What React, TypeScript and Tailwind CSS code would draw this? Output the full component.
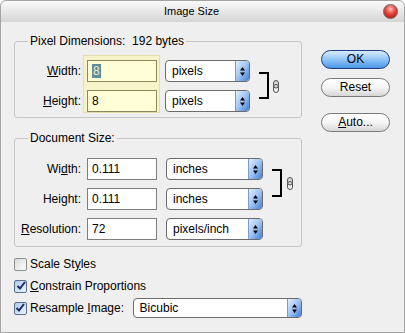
import React from 'react';

const Arrows = () => (
  <svg width="5" height="9" viewBox="0 0 5 9">
    <path d="M2.5 0 L5 3.5 H0 Z M0 5.5 H5 L2.5 9 Z" fill="#000" />
  </svg>
);

const Chain = () => (
  <svg width="6" height="13" viewBox="0 0 6 13">
    <rect x="0.5" y="0.5" width="5" height="7.5" rx="2.5" fill="#d8d8d8" stroke="#555" />
    <rect x="0.5" y="4.5" width="5" height="8" rx="2.5" fill="none" stroke="#555" />
  </svg>
);

const Select = ({ value, w, h }: { value: string; w: string; h: string }) => (
  <div className={`flex ${w} ${h} overflow-hidden rounded-[4px] border border-[#6b6b6b] bg-white`}>
    <span className="flex flex-1 items-center pl-[6px]">{value}</span>
    <span className="flex w-[14px] items-center justify-center border-l border-[#7d9bd0] bg-gradient-to-br from-[#e2eefd] via-[#9cc3f3] to-[#3f7bd8]">
      <Arrows />
    </span>
  </div>
);

const Check = ({ checked }: { checked: boolean }) => (
  <span
    className={`relative flex h-[13px] w-[13px] items-center justify-center rounded-[2px] border ${
      checked
        ? 'border-[#5b6f8c] bg-gradient-to-br from-[#aecbef] to-[#eef4fc]'
        : 'border-[#8e8f8f] bg-gradient-to-br from-[#d9d9d9] to-white'
    }`}
  >
    {checked && (
      <svg width="10" height="10" viewBox="0 0 10 10">
        <path d="M1.5 5 L4 7.5 L9 1" stroke="#1c2d64" strokeWidth="2" fill="none" />
      </svg>
    )}
  </span>
);

const Button = ({ children, primary }: { children: React.ReactNode; primary?: boolean }) => (
  <div
    className={`h-[19px] w-[69px] rounded-full border text-center leading-[17px] ${
      primary
        ? 'border-[#1d3c85] bg-gradient-to-b from-[#d8ecfd] via-[#8fc5f6] to-[#4b97e6]'
        : 'border-[#7a7a7a] bg-gradient-to-b from-white via-[#f6f6f6] to-[#d6d6d6]'
    }`}
  >
    {children}
  </div>
);

const Label = ({ children }: { children: React.ReactNode }) => (
  <div className="h-[22px] pr-[1px] leading-[22px]">{children}</div>
);

const Field = ({ children }: { children: React.ReactNode }) => (
  <div className="h-[22px] w-[70px] border border-[#7f7f7f] bg-white pl-[4px] leading-[20px]">{children}</div>
);

export default function App() {
  return (
    <div className="flex h-[333px] w-[405px] flex-col rounded-t-[6px] border border-[#a4a4a4] bg-[#efefef] font-['Liberation_Sans',Arial,sans-serif] text-[12px] text-black">
      <div className="flex h-[21px] items-center rounded-t-[6px] bg-gradient-to-b from-[#fafafa] to-[#d5d5d5]">
        <div className="flex-1 text-center text-[11px]">Image Size</div>
        <div className="flex w-[22px] items-center">
          <span className="ml-[1px] h-[15px] w-[15px] rounded-full border border-[#7a5a5a] bg-[radial-gradient(circle_at_50%_30%,#ffc4bc_0%,#e8453c_45%,#9a120c_100%)]" />
        </div>
      </div>

      <div className="flex pl-[13px] pt-[12px]">
        <div className="flex w-[288px] flex-col">
          <fieldset className="rounded-[3px] border border-[#c6c6c6] pb-[4px] pt-[7px]">
            <legend className="ml-[13px] px-[2px] leading-[14px]">{'Pixel Dimensions:\u00a0 192 bytes'}</legend>
            <div className="flex items-start">
              <div className="flex w-[67px] flex-col gap-[8px] pt-[5px] text-right">
                <Label>
                  <u>W</u>idth:
                </Label>
                <Label>
                  <u>H</u>eight:
                </Label>
              </div>
              <div className="ml-[1px] flex flex-col gap-[8px] border border-[#e2dea6] bg-[#f6f4c8] pl-[3px] pr-[2px] pt-[4px]">
                <div className="flex h-[22px] w-[70px] items-center border border-[#8c8a5c] bg-[#fffed6] pl-[4px]">
                  <span className="bg-[#5f8b9b] px-[1px] leading-[14px] text-[#f4f3d2]">8</span>
                </div>
                <div className="h-[22px] w-[70px] border border-[#8c8a5c] bg-[#fffed6] pl-[4px] leading-[20px]">8</div>
              </div>
              <div className="ml-[5px] flex flex-col gap-[8px] pt-[5px]">
                <Select value="pixels" w="w-[85px]" h="h-[22px]" />
                <Select value="pixels" w="w-[85px]" h="h-[22px]" />
              </div>
              <div className="ml-[9px] mt-[17px] h-[27px] w-[10px] border-y-2 border-r-2 border-black" />
              <div className="ml-[4px] mt-[25px]">
                <Chain />
              </div>
            </div>
          </fieldset>

          <fieldset className="mt-[13px] rounded-[3px] border border-[#c6c6c6] pb-[6px] pt-[13px]">
            <legend className="ml-[13px] px-[2px] leading-[14px]">Document Size:</legend>
            <div className="flex items-start">
              <div className="flex w-[67px] flex-col gap-[8px] text-right">
                <Label>
                  Wi<u>d</u>th:
                </Label>
                <Label>
                  Hei<u>g</u>ht:
                </Label>
                <Label>
                  <u>R</u>esolution:
                </Label>
              </div>
              <div className="ml-[5px] flex flex-col gap-[8px]">
                <Field>0.111</Field>
                <Field>0.111</Field>
                <Field>72</Field>
              </div>
              <div className="ml-[9px] flex flex-col gap-[8px]">
                <Select value="inches" w="w-[97px]" h="h-[22px]" />
                <Select value="inches" w="w-[97px]" h="h-[22px]" />
                <Select value="pixels/inch" w="w-[97px]" h="h-[22px]" />
              </div>
              <div className="ml-[9px] mt-[11px] h-[28px] w-[10px] border-y-2 border-r-2 border-black" />
              <div className="ml-[5px] mt-[19px]">
                <Chain />
              </div>
            </div>
          </fieldset>

          <div className="mt-[7px] flex flex-col gap-[2px]">
            <div className="flex h-[20px] items-center">
              <Check checked={false} />
              <span className="ml-[3px]">
                Scale St<u>y</u>les
              </span>
            </div>
            <div className="flex h-[20px] items-center">
              <Check checked />
              <span className="ml-[3px]">
                <u>C</u>onstrain Proportions
              </span>
            </div>
            <div className="flex h-[20px] items-center">
              <Check checked />
              <span className="ml-[3px] w-[103px]">
                Resample <u>I</u>mage:
              </span>
              <Select value="Bicubic" w="w-[170px]" h="h-[20px]" />
            </div>
          </div>
        </div>

        <div className="ml-[19px] mt-[16px] flex flex-col">
          <Button primary>OK</Button>
          <div className="mt-[9px]">
            <Button>Reset</Button>
          </div>
          <div className="mt-[16px]">
            <Button>
              <u>A</u>uto...
            </Button>
          </div>
        </div>
      </div>
    </div>
  );
}
